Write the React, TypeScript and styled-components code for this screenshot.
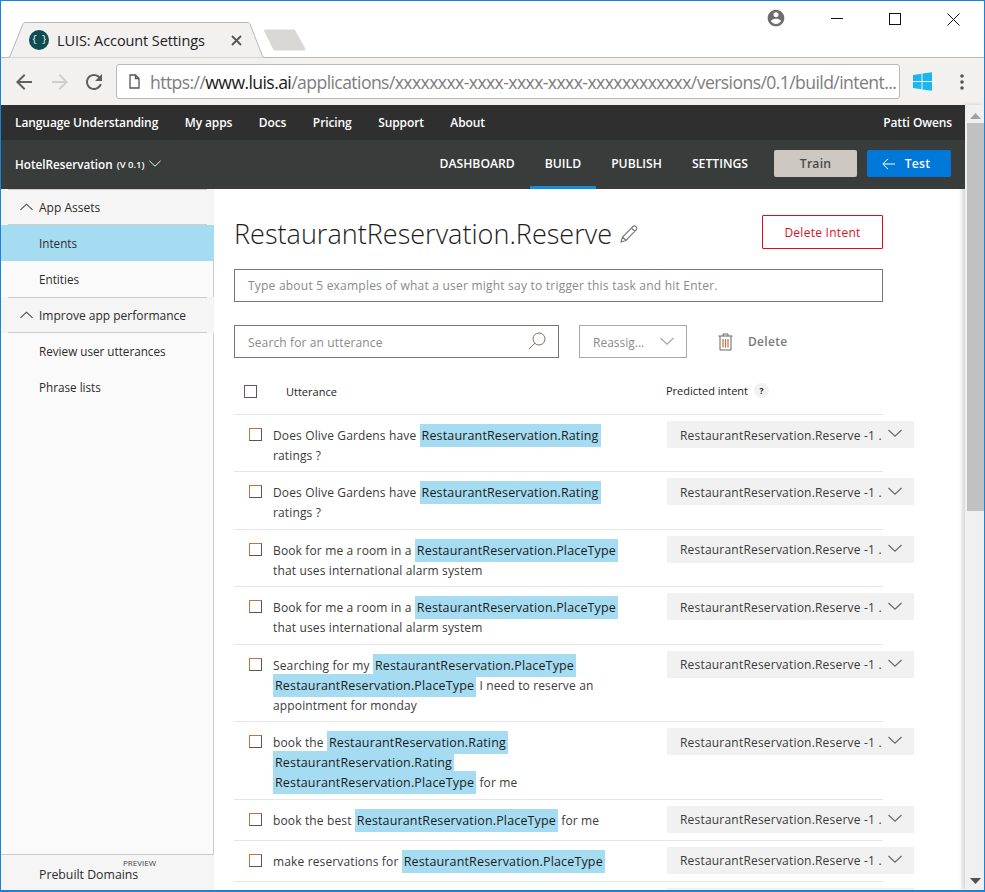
import React from 'react';
import styled, { createGlobalStyle } from 'styled-components';

const GlobalStyle = createGlobalStyle`
  html, body { margin: 0; padding: 0; overflow: hidden; background: #fff; }
  * { box-sizing: border-box; }
  body { font-family: "Open Sans", "Noto Sans", sans-serif; }
`;

const Win = styled.div`
  width: 985px;
  height: 892px;
  border: 1px solid #1883d7;
  border-bottom-width: 2px;
  display: flex;
  flex-direction: column;
  overflow: hidden;
  background: #fff;
`;

const TabStrip = styled.div`
  height: 57px;
  flex: none;
  display: flex;
  justify-content: space-between;
  border-bottom: 1px solid #b8b8b8;
`;

const Tabs = styled.div`
  display: flex;
  align-items: flex-end;
  padding-left: 7px;
`;

const Tab = styled.div`
  position: relative;
  width: 258px;
  height: 36px;
  margin-bottom: -1px;
  display: flex;
  align-items: center;
  padding: 0 24px 0 21px;
  z-index: 1;
`;

const TabShape = styled.svg`
  position: absolute;
  left: 0;
  top: 0;
`;

const Favicon = styled.div`
  position: relative;
  width: 20px;
  height: 20px;
  border-radius: 50%;
  background: #0f4c52;
  color: #fff;
  font: 400 9px "Liberation Mono", monospace;
  letter-spacing: -0.5px;
  display: flex;
  align-items: center;
  justify-content: center;
  flex: none;
`;

const TabTitle = styled.div`
  position: relative;
  flex: 1;
  margin-left: 8px;
  font-size: 14.5px;
  letter-spacing: -0.1px;
  color: #222;
  white-space: nowrap;
`;

const NewTab = styled.svg`
  margin: 0 0 6px -3px;
`;

const WinControls = styled.div`
  display: flex;
  align-items: flex-start;
  padding: 7px 24px 0 0;
`;

const ProfileSlot = styled.div`
  width: 26px;
  margin-right: 42px;
  display: flex;
  justify-content: center;
`;

const WinBtn = styled.svg`
  display: block;
  margin-top: 5px;
`;

const WinGap = styled.div`
  width: 46px;
`;

const Toolbar = styled.div`
  height: 47px;
  flex: none;
  background: #f2f1f0;
  display: flex;
  align-items: center;
  padding-left: 11px;
`;

const NavIcon = styled.svg<{ $gap: number }>`
  display: block;
  flex: none;
  margin-right: ${p => p.$gap}px;
`;

const Omnibox = styled.div`
  width: 784px;
  height: 35px;
  margin-left: 2px;
  background: #fff;
  border: 1px solid #b9b9b9;
  border-radius: 3px;
  display: flex;
  align-items: center;
  padding-left: 12px;
  font-size: 17.6px;
  color: #7d7d7d;
  white-space: nowrap;
  overflow: hidden;
`;

const UrlText = styled.span`
  margin-left: 10px;
  letter-spacing: -0.59px;
  b { font-weight: 400; color: #1a1a1a; }
`;

const ExtIcons = styled.div`
  flex: 1;
  display: flex;
  align-items: center;
  justify-content: space-between;
  padding: 0 20px 0 13px;
`;

const Body = styled.div`
  flex: 1;
  min-height: 0;
  display: flex;
`;

const Page = styled.div`
  width: 964px;
  flex: none;
  display: flex;
  flex-direction: column;
  overflow: hidden;
`;

const TopNav = styled.div`
  height: 35px;
  flex: none;
  background: #2f2f2f;
  display: flex;
  align-items: center;
  padding: 0 13px 0 14px;
  color: #fff;
  font-size: 12px;
  font-weight: 600;
  letter-spacing: -0.1px;
  position: relative;
  z-index: 2;
`;

const TopLink = styled.span`
  margin-right: 26.5px;
  white-space: nowrap;
`;

const UserName = styled.span`
  margin-left: auto;
`;

const SubNav = styled.div`
  height: 49px;
  flex: none;
  background: #383c3b;
  display: flex;
  align-items: center;
  padding: 0 14px 0 14px;
  color: #fff;
  font-size: 12.2px;
  font-weight: 600;
  position: relative;
  z-index: 2;
`;

const AppName = styled.div`
  display: flex;
  align-items: center;
  flex: 1;
  font-size: 11.7px;
  padding-bottom: 2px;
  small { font-size: 9.5px; margin: 1px 4px 0 4px; }
`;

const SubTab = styled.div<{ $active?: boolean }>`
  height: 49px;
  display: flex;
  align-items: center;
  padding: 0 15px;
  border-bottom: 3px solid ${p => (p.$active ? '#0f8fd8' : 'transparent')};
`;

const TrainBtn = styled.div`
  width: 83px;
  height: 27px;
  margin: 0 0 2px 11px;
  background: #ccc8c1;
  color: #4a4a4a;
  border-radius: 2px;
  display: flex;
  align-items: center;
  justify-content: center;
  letter-spacing: 0.2px;
`;

const TestBtn = styled.div`
  width: 84px;
  height: 27px;
  margin: 0 0 2px 10px;
  padding-right: 6px;
  background: #0078d7;
  border-radius: 2px;
  display: flex;
  align-items: center;
  justify-content: center;
  gap: 10px;
  letter-spacing: 0.2px;
`;

const Content = styled.div`
  flex: 1;
  min-height: 0;
  display: flex;
`;

const Sidebar = styled.div`
  width: 213px;
  flex: none;
  background: #fafafa;
  border-right: 1px solid #cfcdc9;
  display: flex;
  flex-direction: column;
  font-size: 11.7px;
  color: #2b2b2b;
`;

const SideHead = styled.div`
  height: 36px;
  background: #f5f5f5;
  margin-right: -1px;
  display: flex;
  align-items: center;
  padding-left: 19px;
  gap: 6px;
  position: relative;
  font-size: 12px;
  font-weight: 500;
  &::before, &::after {
    content: "";
    position: absolute;
    left: 7px;
    width: 199px;
    height: 1px;
    background: #cfcdc9;
  }
  &::before { top: 0; }
  &::after { bottom: 0; }
`;

const SideItem = styled.div<{ $active?: boolean }>`
  height: 36px;
  display: flex;
  align-items: center;
  padding-left: 38px;
  background: ${p => (p.$active ? '#a6dcf2' : 'transparent')};
  margin-right: ${p => (p.$active ? '-1px' : '0')};
`;

const SideFoot = styled.div`
  margin-top: auto;
  height: 36px;
  background: #f5f5f5;
  margin-right: -1px;
  border-top: 1px solid #cfcdc9;
  padding: 5px 0 0 38px;
  position: relative;
  display: flex;
  align-items: center;
  font-weight: 500;
  font-size: 12.3px;
  line-height: 14px;
`;

const PreviewTag = styled.span`
  position: absolute;
  left: 122px;
  top: 3px;
  font-size: 8px;
  line-height: 9px;
  color: #444;
`;

const Main = styled.div`
  width: 649px;
  margin-left: 20px;
  flex: none;
`;

const TitleRow = styled.div`
  height: 80px;
  display: flex;
  align-items: center;
  padding-top: 8px;
`;

const Title = styled.h1`
  margin: 0;
  font-size: 27.05px;
  font-weight: 300;
  color: #1c1c1c;
  white-space: nowrap;
`;

const Pencil = styled.svg`
  margin: 2px 0 0 8px;
`;

const DeleteIntent = styled.div`
  margin: 0 0 2px auto;
  width: 121px;
  height: 34px;
  border: 1px solid #e00b1c;
  border-radius: 1px;
  color: #d8121f;
  font-size: 12px;
  letter-spacing: 0.27px;
  display: flex;
  align-items: center;
  justify-content: center;
`;

const ExampleInput = styled.div`
  height: 33px;
  border: 1px solid #767676;
  display: flex;
  align-items: center;
  padding-left: 13px;
  font-size: 12px;
  letter-spacing: 0.22px;
  color: #8a8a8a;
  white-space: nowrap;
`;

const Actions = styled.div`
  display: flex;
  align-items: center;
  margin-top: 23px;
  height: 33px;
`;

const SearchBox = styled(ExampleInput)`
  width: 325px;
  flex: none;
  justify-content: space-between;
  padding-right: 12px;
  padding-top: 2px;
  letter-spacing: 0.13px;
  svg { margin-top: -4px; }
`;

const Reassign = styled(ExampleInput)`
  width: 108px;
  margin-left: 20px;
  border-color: #a8a8a8;
  justify-content: space-between;
  padding-right: 12px;
  padding-top: 2px;
  letter-spacing: 0;
  svg { margin-top: -2px; }
`;

const TrashBtn = styled.div`
  margin-left: 31px;
  display: flex;
  align-items: center;
  gap: 15px;
  font-size: 12px;
  font-weight: 600;
  letter-spacing: 0.3px;
  color: #7a7a7a;
`;

const HeadRow = styled.div`
  height: 57px;
  display: flex;
  align-items: center;
  border-bottom: 1px solid #e6e6e6;
  font-size: 11px;
  font-weight: 500;
  color: #222;
  padding-top: 11px;
`;

const Check = styled.div<{ $head?: boolean }>`
  width: 13px;
  height: 13px;
  flex: none;
  background: #fff;
  border: 1px solid ${p => (p.$head ? '#7a4a7a' : '#c5713a')};
  border-right-color: #555;
  border-bottom-color: #555;
`;

const HeadCheck = styled.div`
  padding-left: 10px;
  width: 52px;
`;

const HeadUtterance = styled.div`
  width: 380px;
`;

const HeadIntent = styled.div`
  margin-top: -2px;
`;

const HelpDot = styled.span`
  display: inline-flex;
  width: 15px;
  height: 15px;
  margin-left: 6px;
  border-radius: 50%;
  background: #f1f1f1;
  align-items: center;
  justify-content: center;
  font-size: 8.5px;
  font-weight: 700;
  vertical-align: 1px;
`;

const Row = styled.div`
  min-height: 41px;
  display: flex;
  align-items: flex-start;
  padding: 6px 0 5.45px 15px;
  border-bottom: 1px solid #e6e6e6;
`;

const RowCheck = styled.div`
  width: 24px;
  flex: none;
  padding-top: 7px;
`;

const RowText = styled.div`
  width: 355px;
  flex: none;
  padding-top: 5px;
  font-size: 12px;
  line-height: 20px;
  letter-spacing: 0.14px;
  color: #3a3a3a;
`;

const Entity = styled.span`
  background: #a6dcf2;
  color: #1c1c1c;
  font-size: 12.5px;
  font-weight: 500;
  padding: 3px 2px;
  -webkit-box-decoration-break: clone;
  box-decoration-break: clone;
  letter-spacing: 0.15px;
`;

const IntentSelect = styled.div`
  width: 247px;
  height: 27px;
  flex: none;
  margin-left: 39px;
  margin-right: -31px;
  padding: 1px 12px 0 13px;
  background: #f1f1f1;
  border-radius: 1px;
  display: flex;
  align-items: center;
  justify-content: space-between;
  font-size: 12px;
  letter-spacing: 0.2px;
  color: #3a3a3a;
  white-space: nowrap;
  svg { margin-top: -3px; }
`;

const Scrollbar = styled.div`
  width: 20px;
  flex: none;
  background: #f0f0f0;
  box-shadow: -3px 0 4px rgba(0, 0, 0, 0.16);
  display: flex;
  flex-direction: column;
  align-items: center;
  position: relative;
  z-index: 1;
`;

const Thumb = styled.div`
  width: 17px;
  height: 388px;
  margin-top: 4px;
  background: #c1c1c1;
`;

const ScrollArrow = styled.svg<{ $bottom?: boolean }>`
  flex: none;
  margin-top: ${p => (p.$bottom ? 'auto' : '8px')};
  margin-bottom: ${p => (p.$bottom ? '6px' : '0')};
`;

const Chevron = ({ dir = 'down', size = 14, color = '#555' }: { dir?: 'up' | 'down'; size?: number; color?: string }) => (
  <svg width={size} height={size * 0.6} viewBox="0 0 14 8" fill="none" stroke={color} strokeWidth="1.1">
    <path d={dir === 'down' ? 'M0.5 0.8 L7 7 L13.5 0.8' : 'M0.5 7.2 L7 1 L13.5 7.2'} />
  </svg>
);

type Part = string | { entity: string };
const rating = { entity: 'RestaurantReservation.Rating' };
const place = { entity: 'RestaurantReservation.PlaceType' };

// last row only peeks in at the window's bottom edge, nothing of its text shows
const rows: Part[][] = [
  ['Does Olive Gardens have ', rating, ' ratings ?'],
  ['Does Olive Gardens have ', rating, ' ratings ?'],
  ['Book for me a room in a ', place, ' that uses international alarm system'],
  ['Book for me a room in a ', place, ' that uses international alarm system'],
  ['Searching for my ', place, ' ', place, ' I need to reserve an appointment for monday'],
  ['book the ', rating, ' ', rating, ' ', place, ' for me'],
  ['book the best ', place, ' for me'],
  ['make reservations for ', place],
  [],
];

export default function App() {
  return (
    <>
      <GlobalStyle />
      <Win>
        <TabStrip>
          <Tabs>
            <Tab>
              <TabShape width="258" height="36" viewBox="0 0 258 36">
                <path d="M0 35.5 C1 35.5 1.5 35 2 34 L15 2 C15.5 1 16 0.5 17 0.5 H240 C241 0.5 241.5 1 242 2 L254 33 C254.5 35 255.5 35.5 257.5 35.5" fill="#f2f1f0" stroke="#b8b8b8" />
              </TabShape>
              <Favicon>{'{ }'}</Favicon>
              <TabTitle>LUIS: Account Settings</TabTitle>
              <svg width="11" height="11" viewBox="0 0 11 11" stroke="#555" strokeWidth="1.8" style={{ position: 'relative' }}>
                <path d="M1 1 L10 10 M10 1 L1 10" />
              </svg>
            </Tab>
            <NewTab width="44" height="22" viewBox="0 0 44 22">
              <path d="M2 0.5 H30 C31 0.5 32 1 32.5 2 L42 19 C43 21 42 21.5 41 21.5 H12 C11 21.5 10.5 21 10 20 L1 2 C0.5 1 1 0.5 2 0.5 Z" fill="#d9d7d3" />
            </NewTab>
          </Tabs>
          <WinControls>
            <ProfileSlot>
              <svg width="20" height="20" viewBox="0 0 24 24" fill="#6e6e6e">
                <path d="M12 2C6.48 2 2 6.48 2 12s4.48 10 10 10 10-4.48 10-10S17.52 2 12 2zm0 3c1.66 0 3 1.34 3 3s-1.34 3-3 3-3-1.34-3-3 1.34-3 3-3zm0 14.2c-2.5 0-4.71-1.28-6-3.22.03-1.99 4-3.08 6-3.08 1.99 0 5.97 1.09 6 3.08-1.29 1.94-3.5 3.22-6 3.22z" />
              </svg>
            </ProfileSlot>
            <WinBtn width="12" height="12" viewBox="0 0 12 12" stroke="#111">
              <path d="M0 5.5 H12" />
            </WinBtn>
            <WinGap />
            <WinBtn width="12" height="12" viewBox="0 0 12 12" fill="none" stroke="#111">
              <rect x="0.5" y="0.5" width="11" height="11" />
            </WinBtn>
            <WinGap />
            <WinBtn width="13" height="13" viewBox="0 0 13 13" stroke="#111">
              <path d="M0.5 0.5 L12.5 12.5 M12.5 0.5 L0.5 12.5" />
            </WinBtn>
          </WinControls>
        </TabStrip>

        <Toolbar>
          <NavIcon $gap={12} width="24" height="24" viewBox="0 0 24 24" fill="#5f5f5f">
            <path d="M20 11H7.83l5.59-5.59L12 4l-8 8 8 8 1.41-1.41L7.83 13H20v-2z" />
          </NavIcon>
          <NavIcon $gap={10} width="24" height="24" viewBox="0 0 24 24" fill="#cfcfcf">
            <path d="M4 11h12.17l-5.59-5.59L12 4l8 8-8 8-1.41-1.41L16.17 13H4v-2z" />
          </NavIcon>
          <NavIcon $gap={8} width="24" height="24" viewBox="0 0 24 24" fill="#5f5f5f">
            <path d="M17.65 6.35C16.2 4.9 14.21 4 12 4c-4.42 0-7.99 3.58-7.99 8s3.57 8 7.99 8c3.73 0 6.84-2.55 7.73-6h-2.08c-.82 2.33-3.04 4-5.65 4-3.31 0-6-2.69-6-6s2.69-6 6-6c1.66 0 3.14.69 4.22 1.78L13 11h7V4l-2.35 2.35z" />
          </NavIcon>
          <Omnibox>
            <svg width="11" height="15" viewBox="0 0 11 15" fill="none" stroke="#555" strokeWidth="1.3">
              <path d="M1 1 H6.5 L10 4.5 V14 H1 Z M6.5 1 V4.5 H10" />
            </svg>
            <UrlText>
              https://<b>www.luis.ai</b>/applications/xxxxxxxx-xxxx-xxxx-xxxx-xxxxxxxxxxxx/versions/0.1/build/intent...
            </UrlText>
          </Omnibox>
          <ExtIcons>
            <svg width="19" height="19" viewBox="0 0 19 19" fill="#1cb6ef">
              <path d="M0 3 L8.5 1.8 V9 H0 Z M9.5 1.6 L19 0.3 V9 H9.5 Z M0 10 H8.5 V17.2 L0 16 Z M9.5 10 H19 V18.7 L9.5 17.4 Z" />
            </svg>
            <svg width="4" height="16" viewBox="0 0 4 16" fill="#555">
              <circle cx="2" cy="2" r="1.8" />
              <circle cx="2" cy="8" r="1.8" />
              <circle cx="2" cy="14" r="1.8" />
            </svg>
          </ExtIcons>
        </Toolbar>

        <Body>
          <Page>
            <TopNav>
              <TopLink>Language Understanding</TopLink>
              <TopLink>My apps</TopLink>
              <TopLink>Docs</TopLink>
              <TopLink>Pricing</TopLink>
              <TopLink>Support</TopLink>
              <TopLink>About</TopLink>
              <UserName>Patti Owens</UserName>
            </TopNav>
            <SubNav>
              <AppName>
                HotelReservation <small>(V 0.1)</small>
                <Chevron size={12} color="#fff" />
              </AppName>
              <SubTab>DASHBOARD</SubTab>
              <SubTab $active>BUILD</SubTab>
              <SubTab>PUBLISH</SubTab>
              <SubTab>SETTINGS</SubTab>
              <TrainBtn>Train</TrainBtn>
              <TestBtn>
                <svg width="13" height="12" viewBox="0 0 13 12" fill="none" stroke="#fff" strokeWidth="1">
                  <path d="M13 6 H1 M6 0.8 L0.8 6 L6 11.2" />
                </svg>
                Test
              </TestBtn>
            </SubNav>
            <Content>
              <Sidebar>
                <SideHead>
                  <Chevron dir="up" size={13} color="#444" />
                  App Assets
                </SideHead>
                <SideItem $active>Intents</SideItem>
                <SideItem>Entities</SideItem>
                <SideHead>
                  <Chevron dir="up" size={13} color="#444" />
                  Improve app performance
                </SideHead>
                <SideItem>Review user utterances</SideItem>
                <SideItem>Phrase lists</SideItem>
                <SideFoot>
                  <PreviewTag>PREVIEW</PreviewTag>
                  Prebuilt Domains
                </SideFoot>
              </Sidebar>
              <Main>
                <TitleRow>
                  <Title>RestaurantReservation.Reserve</Title>
                  <Pencil width="18" height="18" viewBox="0 0 18 18" fill="none" stroke="#777" strokeWidth="1.1">
                    <path d="M1 17 L2.5 12 L13 1.5 C14 0.7 15 0.7 16 1.7 C17 2.7 17 3.7 16.3 4.7 L6 15.5 Z M2.5 12 L6 15.5 M11.5 3 L15 6.5" />
                  </Pencil>
                  <DeleteIntent>Delete Intent</DeleteIntent>
                </TitleRow>
                <ExampleInput>Type about 5 examples of what a user might say to trigger this task and hit Enter.</ExampleInput>
                <Actions>
                  <SearchBox>
                    Search for an utterance
                    <svg width="18" height="18" viewBox="0 0 18 18" fill="none" stroke="#8a6a5a" strokeWidth="1">
                      <circle cx="11" cy="7" r="6" />
                      <path d="M6.8 11.2 L1 17" />
                    </svg>
                  </SearchBox>
                  <Reassign>
                    Reassig...
                    <Chevron size={14} color="#a0a0a0" />
                  </Reassign>
                  <TrashBtn>
                    <svg width="15" height="18" viewBox="0 0 15 18" fill="none" stroke="#666" strokeWidth="1">
                      <path d="M0.5 3 H14.5 M5 3 V1 H10 V3 M2 3 V17 H13 V3" />
                      <path d="M5 6 V14.5 M7.5 6 V14.5 M10 6 V14.5" stroke="#c5713a" strokeWidth="1.2" />
                    </svg>
                    Delete
                  </TrashBtn>
                </Actions>
                <HeadRow>
                  <HeadCheck>
                    <Check $head />
                  </HeadCheck>
                  <HeadUtterance>Utterance</HeadUtterance>
                  <HeadIntent>
                    Predicted intent<HelpDot>?</HelpDot>
                  </HeadIntent>
                </HeadRow>
                {rows.map((parts, i) => (
                  <Row key={i}>
                    <RowCheck>
                      <Check />
                    </RowCheck>
                    <RowText>
                      {parts.map((part, j) =>
                        typeof part === 'string' ? part : <Entity key={j}>{part.entity}</Entity>
                      )}
                    </RowText>
                    <IntentSelect>
                      {parts.length > 0 && 'RestaurantReservation.Reserve -1 .'}
                      <Chevron size={14} color="#666" />
                    </IntentSelect>
                  </Row>
                ))}
              </Main>
            </Content>
          </Page>
          <Scrollbar>
            <ScrollArrow width="11" height="6" viewBox="0 0 11 6" fill="#a0a0a0">
              <path d="M5.5 0 L11 6 H0 Z" />
            </ScrollArrow>
            <Thumb />
            <ScrollArrow $bottom width="11" height="6" viewBox="0 0 11 6" fill="#505050">
              <path d="M0 0 H11 L5.5 6 Z" />
            </ScrollArrow>
          </Scrollbar>
        </Body>
      </Win>
    </>
  );
}
